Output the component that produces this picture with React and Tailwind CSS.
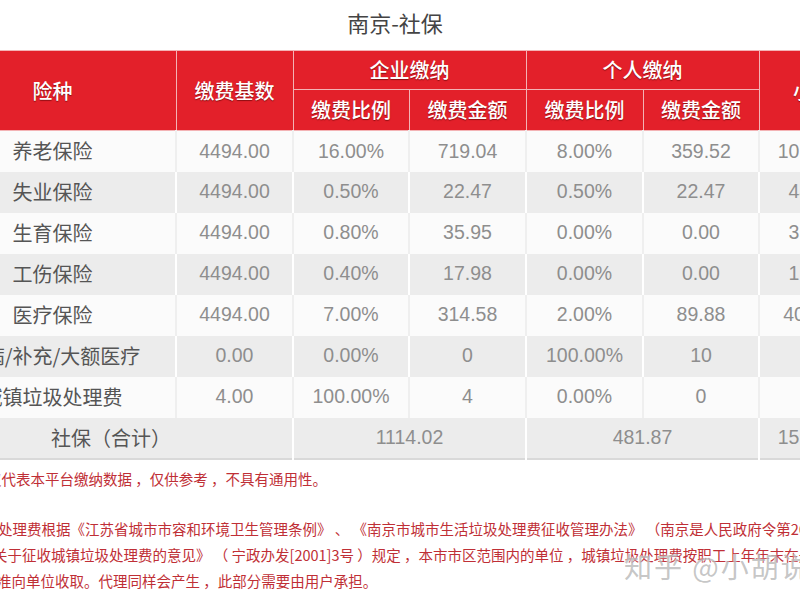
import React from "react";

const rows = [
  ["养老保险", "4494.00", "16.00%", "719.04", "8.00%", "359.52", "1078.56"],
  ["失业保险", "4494.00", "0.50%", "22.47", "0.50%", "22.47", "44.94"],
  ["生育保险", "4494.00", "0.80%", "35.95", "0.00%", "0.00", "35.95"],
  ["工伤保险", "4494.00", "0.40%", "17.98", "0.00%", "0.00", "17.98"],
  ["医疗保险", "4494.00", "7.00%", "314.58", "2.00%", "89.88", "404.46"],
  ["大病/补充/大额医疗", "0.00", "0.00%", "0", "100.00%", "10", "10"],
  ["城镇垃圾处理费", "4.00", "100.00%", "4", "0.00%", "0", "4"],
];

const font = "font-['Liberation_Sans','Noto_Sans_CJK_SC',sans-serif]";
const cjk = "font-['Noto_Sans_CJK_SC','Liberation_Sans',sans-serif]";

export default function App() {
  const th =
    "border border-[#f3b3b5] text-white text-[20px] font-medium text-center align-middle [text-shadow:0_1px_1px_rgba(80,0,0,0.6)] " +
    cjk;
  return (
    <div className={"relative w-[800px] h-[600px] overflow-hidden bg-white " + font}>
      <div className={"h-[50px] pt-[8px] pr-[10px] text-center text-[22px] leading-[28px] text-[#444] " + cjk}>
        南京-社保
      </div>

      <div className="w-[800px] overflow-hidden">
        <table className="table-fixed border-collapse ml-[-72px] w-[938px] shadow-[0_-3px_6px_rgba(0,0,0,0.07)]">
          <colgroup>
            <col className="w-[247px]" />
            <col className="w-[117px]" />
            <col className="w-[116px]" />
            <col className="w-[117px]" />
            <col className="w-[117px]" />
            <col className="w-[116px]" />
            <col className="w-[108px]" />
          </colgroup>
          <thead className="bg-[#e3202a]">
            <tr className="h-[39px]">
              <th rowSpan={2} className={th}>险种</th>
              <th rowSpan={2} className={th}>缴费基数</th>
              <th colSpan={2} className={th}>企业缴纳</th>
              <th colSpan={2} className={th}>个人缴纳</th>
              <th rowSpan={2} className={th}>小计</th>
            </tr>
            <tr className="h-[41px]">
              <th className={th}>缴费比例</th>
              <th className={th}>缴费金额</th>
              <th className={th}>缴费比例</th>
              <th className={th}>缴费金额</th>
            </tr>
          </thead>
          <tbody>
            {rows.map((r, i) => {
              const even = i % 2 === 1;
              const rowCls = even ? "bg-[#ececec]" : "bg-[#fbfbfb]";
              const bd = even ? "border-x-2 border-white" : "border-x-2 border-[#efefef]";
              return (
                <tr key={r[0]} className={"h-[41px] " + rowCls}>
                  <td className={"text-center text-[20px] text-[#555] whitespace-nowrap " + bd + " " + cjk}>
                    {r[0]}
                  </td>
                  {r.slice(1).map((v, j) => (
                    <td key={j} className={"text-center text-[19.5px] text-[#8e8e8e] " + bd}>
                      {v}
                    </td>
                  ))}
                </tr>
              );
            })}
            <tr className="h-[41px] bg-[#ececec] border-b-2 border-[#d9d9d9]">
              <td colSpan={2} className={"text-center text-[20px] text-[#555] border-x-2 border-white " + cjk}>
                社保（合计）
              </td>
              <td colSpan={2} className="text-center text-[19.5px] text-[#8e8e8e] border-x-2 border-white">
                1114.02
              </td>
              <td colSpan={2} className="text-center text-[19.5px] text-[#8e8e8e] border-x-2 border-white">
                481.87
              </td>
              <td className="text-center text-[19.5px] text-[#8e8e8e] border-x-2 border-white">
                1595.89
              </td>
            </tr>
          </tbody>
        </table>
      </div>

      <div className={"mt-[6px] text-[14.5px] leading-[26px] text-[#bf2f36] whitespace-nowrap " + cjk}>
        <div className="ml-[-13px]">仅代表本平台缴纳数据 ，仅供参考 ，不具有通用性。</div>
        <div className="mt-[24px] ml-[-2px]">
          处理费根据《江苏省城市市容和环境卫生管理条例》 、 《南京市城市生活垃圾处理费征收管理办法》 （南京是人民政府令第263号）
        </div>
        <div className="ml-[-7px]">
          关于征收城镇垃圾处理费的意见》 （ 宁政办发[2001]3号 ）规定 ，本市市区范围内的单位 ，城镇垃圾处理费按职工上年年末在册人数
        </div>
        <div className="ml-[-3px]">准向单位收取。代理同样会产生 ，此部分需要由用户承担。</div>
      </div>

      <div
        className={
          "absolute left-[624px] top-[548px] whitespace-nowrap text-[28px] leading-[36px] tracking-[2px] text-[rgba(150,150,150,0.55)] [text-shadow:0_0_2px_rgba(255,255,255,0.9)] " +
          cjk
        }
      >
        知乎 @小胡说
      </div>
    </div>
  );
}
